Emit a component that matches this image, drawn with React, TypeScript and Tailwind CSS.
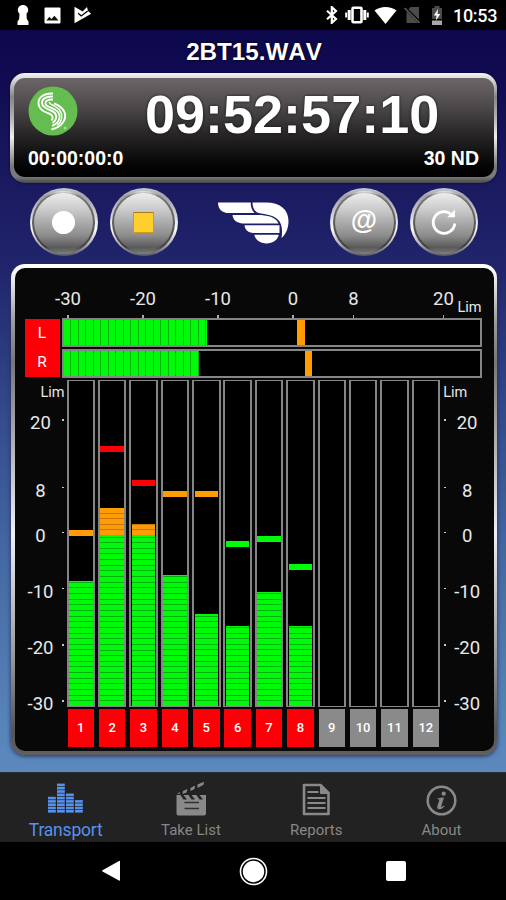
import type { ReactNode } from 'react'

type Peak = 'green' | 'orange' | 'red'

interface Channel {
  id: number
  armed: boolean
  // all values are pixels measured from the top of the meter well
  level?: number
  peak?: number
  color?: Peak
}

const WELL = 324
const ZERO = 154

const CHANNELS: Channel[] = [
  { id: 1, armed: true, level: 199.5, peak: 149, color: 'orange' },
  { id: 2, armed: true, level: 126.5, peak: 65, color: 'red' },
  { id: 3, armed: true, level: 143, peak: 98.5, color: 'red' },
  { id: 4, armed: true, level: 193.5, peak: 109.5, color: 'orange' },
  { id: 5, armed: true, level: 233, peak: 109.5, color: 'orange' },
  { id: 6, armed: true, level: 244.5, peak: 160, color: 'green' },
  { id: 7, armed: true, level: 211, peak: 154.5, color: 'green' },
  { id: 8, armed: true, level: 244.5, peak: 182.5, color: 'green' },
  { id: 9, armed: false },
  { id: 10, armed: false },
  { id: 11, armed: false },
  { id: 12, armed: false },
]

const PEAK_CLASS: Record<Peak, string> = {
  green: 'bg-[#00fb08]',
  orange: 'bg-[#ff9c05]',
  red: 'bg-[#fb0007]',
}

function StatusBar() {
  return (
    <div className="flex h-[30px] shrink-0 items-center bg-black text-white">
      <svg className="ml-[17px]" width="12" height="20" viewBox="0 0 12 20" fill="#fff">
        <path d="M6 0c3 0 5.200 2.200 5.200 5 0 1.600-.7 2.800-1.700 3.700L9.800 14l1.700 2.500V20H.5v-3.500L2.200 14l.3-5.300C1.500 7.800.8 6.600.8 5 .8 2.200 3 0 6 0z" />
      </svg>
      <svg className="ml-[15px]" width="17" height="17" viewBox="0 0 17 17">
        <rect x="0.5" y="0.5" width="16" height="16" rx="1" fill="#fff" />
        <path d="M2.500 13.500l2.800-3.700 2.200 2.200 2.900-3.300 4.100 4.800z" fill="#111" />
      </svg>
      <svg className="ml-[13px]" width="18" height="18" viewBox="0 0 18 18">
        <path d="M.5.8L7 4.600l1.500 1L13 1l1 4 3.200 2.800L.5 17.200z" fill="#fff" />
        <path d="M4.200 7.200l3 2.800 6.500-5" fill="none" stroke="#000" strokeWidth="1.300" />
      </svg>
      <div className="grow" />
      <svg width="12" height="18" viewBox="0 0 12 18" fill="none" stroke="#fff" strokeWidth="2.200">
        <path d="M1 4.800l9 8.200-4.200 3.800V1.200L10 5 1 13.200" />
      </svg>
      <svg className="ml-[7px]" width="24" height="18" viewBox="0 0 24 18" fill="none" stroke="#fff">
        <rect x="7.500" y="1.700" width="9" height="14.600" rx="1" strokeWidth="2.600" />
        <path d="M4.200 4v10M19.800 4v10" strokeWidth="3" />
        <path d="M1.200 6.500v5M22.800 6.500v5" strokeWidth="2" />
      </svg>
      <svg className="ml-[5px]" width="23" height="17" viewBox="0 0 23 17" fill="#fff">
        <path d="M11.500 17L.5 3.600C3.500 1.200 7.300 0 11.500 0s8 1.200 11 3.600z" />
      </svg>
      <svg className="ml-[7px]" width="17" height="18" viewBox="0 0 17 18">
        <path d="M6.500 1H15v16H2.500V5.200z" fill="#4b4b4b" />
        <path d="M.5 1.500l15.500 15" stroke="#000" strokeWidth="3" />
        <path d="M.5 2l15 14.800" stroke="#5c5c5c" strokeWidth="1.500" />
      </svg>
      <svg className="ml-[10px]" width="12" height="19" viewBox="0 0 12 19">
        <path d="M3.500 0h5v2H11v11H1V2h2.500z" fill="#4b4b4b" />
        <path d="M1 14.500h10V19H1z" fill="#a8a8a8" />
        <path d="M7 3L2.800 9.500h2.700L5 14.500 9.300 8H6.500z" fill="#fff" />
      </svg>
      <span className="ml-[10px] mr-[9px] mt-[2px] w-[44px] text-[18px] font-medium leading-none tracking-[-0.3px]">10:53</span>
    </div>
  )
}

function RoundButton({ className = '', children }: { className?: string; children: ReactNode }) {
  return (
    <button
      className={`h-[68px] w-[68px] shrink-0 rounded-full bg-[linear-gradient(#c9cad6,#a0a0a6_12%,#c8c8cc_35%,#ffffff_60%,#b0b0b4_82%,#555761)] p-[2.5px] ${className}`}
    >
      <span className="block h-full w-full rounded-full bg-[linear-gradient(#ededed,#77777a_8%,#565658_60%,#3f3f42_88%,#858588)] p-[2px]">
        <span className="flex h-full w-full items-center justify-center rounded-full bg-[linear-gradient(#ededed,#c8c8c8_30%,#a8a8a8_52%,#8c8c8c_72%,#5a5a5a_92%,#707070)]">
          {children}
        </span>
      </span>
    </button>
  )
}

function Display() {
  return (
    <div className="ml-[10px] mr-[9px] h-[110px] shrink-0 rounded-[15px] bg-[linear-gradient(#f4f4f4,#dcdcdc_5%,#858585_22%,#b0b0b0_40%,#f0f0f0_58%,#777_85%,#7c7c7c_94%,#484848)] p-[3.5px] pb-[6px] pt-[5px] shadow-[0_0_3px_#0a0738]">
      <div className="h-full rounded-[11px] bg-[linear-gradient(#6b6567,#4e4a4b_28%,#262425_58%,#050505_88%,#000)] px-[14.500px] pt-[8px] font-['Liberation_Sans',sans-serif] font-bold text-white">
        <div className="flex h-[56px] items-start">
          <svg className="shrink-0" width="50" height="50" viewBox="0 0 50 50">
            <circle cx="25" cy="25" r="24.500" fill="#64bd4e" />
            <g fill="none" stroke="#fff" strokeWidth="1.900">
              <path d="M25 7.500C15 7 10.200 12 10.500 17.500 11 24 17 26 21 27.500c4 1.500 4.500 4.500 2.500 7" />
              <path d="M25 10.500C18 10 13.500 13 14 17.500c.5 4 5 5.500 9 7 6.500 2.500 7 8.500 1.500 12.500" />
              <path d="M25 13.500c-5-.3-8 1.500-7.500 4.500.5 2.500 5 3 8.500 5C34 27 33.500 36 24 40" />
              <path d="M26 17.500C37 21.500 40 30 34.500 37c-2.500 3.500-6.500 5.500-11 6.200" />
              <path d="M21 16c1 2.500 4 3 7 5 8 5 7 14 1 18.500" strokeWidth="1.400" />
            </g>
            <circle cx="37" cy="42" r="1" fill="none" stroke="#d8f0d0" strokeWidth=".7" />
          </svg>
          <span className="ml-[67px] whitespace-nowrap text-[54px] leading-[56px] [text-shadow:0_0_3px_#111]">09:52:57:10</span>
        </div>
        <div className="mt-[5px] flex justify-between text-[19.500px] leading-[22px]">
          <span>00:00:00:0</span>
          <span>30 ND</span>
        </div>
      </div>
    </div>
  )
}

function Controls() {
  return (
    <div className="flex h-[81px] shrink-0 items-start pt-[5px]">
      <RoundButton className="ml-[29.500px]">
        <span className="h-[23px] w-[23px] rounded-full bg-white" />
      </RoundButton>
      <RoundButton className="ml-[12px]">
        <span className="h-[21px] w-[21px] border border-[#d09a22] border-t-[#a87a20] bg-[#ffd02b]" />
      </RoundButton>
      <svg className="ml-[38.500px] mt-[13px] shrink-0" width="75" height="44" viewBox="0 0 75 44" fill="#fff">
        <path d="M2 1.500h32.700c0 4.500 1.300 8 3.800 10.600H13C6 12.100 2 8 2 1.500z" />
        <path d="M36.500 1.500H50c14 0 22.500 7 22.500 18.500 0 7.500-2.500 13-7 17 .8-4.500.8-9.500-.5-13.500C62.500 16 54 13.800 45 12.600c-6-.8-8.500-5-8.500-11.100z" />
        <path d="M16.500 14h25c10 0 18.500 2 21 8.600H29c-7.500 0-12-3-12.500-8.600z" />
        <path d="M28.500 24.300h35v7.800H39c-6.500 0-10-2.800-10.500-7.800z" />
        <path d="M38.300 33.800h24.500c-1 5.200-6 8.700-12.300 8.700s-11.200-3.500-12.200-8.700z" />
      </svg>
      <RoundButton className="ml-[39px]">
        <span className="pb-[3px] font-['Liberation_Sans',sans-serif] text-[27px] font-bold leading-none text-white">@</span>
      </RoundButton>
      <RoundButton className="ml-[12px]">
        <svg width="28" height="30" viewBox="0 0 28 30" fill="none">
          <path d="M20.500 6.800A10.800 10.800 0 1 0 24.800 16.500" stroke="#fff" strokeWidth="2.800" />
          <path d="M25 2.500v7.800h-7.800z" fill="#fff" />
        </svg>
      </RoundButton>
    </div>
  )
}

function TopScale() {
  return (
    <div className="flex h-[50px] items-start pl-[16px] text-[18.500px] leading-[20px] text-[#e8e8e8]">
      {['-30', '-20', '-10', '0'].map((label) => (
        <div key={label} className="flex w-[75px] shrink-0 flex-col items-center pt-[21px]">
          <span>{label}</span>
          <span className="mt-[6px] h-[3.500px] w-[1.500px] bg-[#aaa]" />
        </div>
      ))}
      <div className="-ml-[7px] flex w-[60px] shrink-0 flex-col items-center pt-[21px]">
        <span>8</span>
        <span className="mt-[6px] h-[3.500px] w-[1.500px] bg-[#aaa]" />
      </div>
      <div className="ml-[30px] flex w-[60px] shrink-0 flex-col items-center pt-[21px]">
        <span>20</span>
        <span className="mt-[6px] h-[3.500px] w-[1.500px] bg-[#aaa]" />
      </div>
      <span className="-ml-[16px] mt-[30.500px] text-[14.500px]">Lim</span>
    </div>
  )
}

function StereoBar({ level, peak }: { level: number; peak: number }) {
  return (
    <div className="flex h-[29px] w-[419.500px] border-2 border-[#868686] bg-black">
      <div
        className="bg-[repeating-linear-gradient(to_right,#00fa0a_0_6.500px,#00b40c_6.500px_7.500px)]"
        style={{ width: level }}
      />
      <div className="w-[7.500px] bg-[#ff9c05]" style={{ marginLeft: peak - level }} />
    </div>
  )
}

function SideScale({ right = false }: { right?: boolean }) {
  const marks = [
    { label: '20', gap: 'mt-[10px]' },
    { label: '8', gap: 'mt-[47.500px]' },
    { label: '0', gap: 'mt-[25px]' },
    { label: '-10', gap: 'mt-[36.200px]' },
    { label: '-20', gap: 'mt-[36.200px]' },
    { label: '-30', gap: 'mt-[36.200px]' },
  ]
  return (
    <div className={`flex shrink-0 flex-col text-[18.500px] leading-[20px] text-[#e8e8e8] ${right ? 'w-[53px]' : 'w-[52px]'}`}>
      <span className={`mt-[3px] text-[14.500px] ${right ? 'pl-[3px]' : 'pr-[2px] text-right'}`}>Lim</span>
      {marks.map((m) => (
        <div key={m.label} className={`flex h-[20px] items-center ${m.gap} ${right ? 'flex-row-reverse pl-[4px]' : 'pr-[3px]'}`}>
          <span className={`text-center ${right ? 'mr-[5px] w-[42px]' : 'w-[49px] pl-[5px]'}`}>{m.label}</span>
          <span className="-mt-[6px] h-[1.500px] w-[2px] shrink-0 bg-[#c8c8c8]" />
        </div>
      ))}
    </div>
  )
}

function ChannelStrip({ ch }: { ch: Channel }) {
  const level = ch.level ?? WELL
  const peak = ch.peak ?? 0
  const hot = Math.max(0, ZERO - level)
  const over = level < ZERO ? ZERO - hot : level
  return (
    <div className="w-[28.500px] shrink-0">
      <div className="flex h-[327px] flex-col border-x-2 border-y-[1.500px] border-[#858585] bg-black px-[.5px]">
        {ch.color && (
          <>
            <div className={`h-[6px] shrink-0 ${PEAK_CLASS[ch.color]}`} style={{ marginTop: peak }} />
            <div className="shrink-0" style={{ height: Math.max(0, over - peak - 6) }} />
            <div
              className="shrink-0 bg-[repeating-linear-gradient(to_top,#ff9c05_0_4.600px,#c87508_4.600px_5.600px)]"
              style={{ height: hot }}
            />
            <div className="grow bg-[repeating-linear-gradient(to_top,#00fb08_0_4.650px,#00b00c_4.650px_5.650px)]" />
          </>
        )}
      </div>
      <div
        className={`mx-[1px] mt-[2px] flex h-[38px] items-center justify-center text-[13px] font-medium text-white ${ch.armed ? 'bg-[#fb0007]' : 'bg-[#8a8a8a]'}`}
      >
        {ch.id}
      </div>
    </div>
  )
}

function MeterPanel() {
  return (
    <div className="ml-[11px] mr-[9px] h-[491px] shrink-0 rounded-[14px] bg-[linear-gradient(#fff,#f5f5f5_2%,#999_12%,#777_20%,#aaa_35%,#f0f0f5_55%,#999_80%,#555_95%,#606060)] p-[3.500px] pb-[4.500px] shadow-[0_1px_4px_#2a2c50]">
      <div className="flex h-full flex-col rounded-[10px] bg-[#080808]">
        <TopScale />
        <div className="flex">
          <div className="ml-[10px] mr-[2.500px] mt-[1.500px] grid h-[58px] w-[35px] shrink-0 grid-rows-2 place-items-center bg-[#fb0007] text-[15.500px] leading-none text-white">
            <span>L</span>
            <span>R</span>
          </div>
          <div className="flex flex-col gap-[2.500px]">
            <StereoBar level={143} peak={233} />
            <StereoBar level={135} peak={240.500} />
          </div>
        </div>
        <div className="mt-[2px] flex">
          <SideScale />
          <div className="flex shrink-0 gap-[2.880px]">
            {CHANNELS.map((ch) => (
              <ChannelStrip key={ch.id} ch={ch} />
            ))}
          </div>
          <SideScale right />
        </div>
      </div>
    </div>
  )
}

function EqIcon() {
  const bars = [
    { x: 0, n: 5 },
    { x: 9, n: 9 },
    { x: 18, n: 6 },
    { x: 27, n: 4 },
  ]
  return (
    <svg width="35" height="30" viewBox="0 0 35 30" fill="#5791ee">
      {bars.map((b) =>
        Array.from({ length: b.n }, (_, i) => (
          <rect key={`${b.x}-${i}`} x={b.x} y={27 - i * 3.300} width="7.800" height="2.600" />
        )),
      )}
    </svg>
  )
}

function Tab({ label, active = false, children }: { label: string; active?: boolean; children: ReactNode }) {
  return (
    <button className="flex w-[125.300px] shrink-0 flex-col items-center">
      <span className={`flex h-[47px] items-end justify-center ${active ? 'pb-[7px]' : 'pb-[4px]'}`}>{children}</span>
      <span
        className={`whitespace-nowrap leading-[20px] ${active ? 'text-[17.500px] tracking-[-0.2px] text-[#5791ee]' : 'text-[15px] text-[#878787]'}`}
      >
        {label}
      </span>
    </button>
  )
}

function TabBar() {
  return (
    <div className="flex h-[70px] shrink-0 items-start border-t border-[#2c2f38] bg-[#222] pl-[3px]">
      <Tab label="Transport" active>
        <EqIcon />
      </Tab>
      <Tab label="Take List">
        <svg width="32" height="35" viewBox="0 0 32 35">
          <path d="M1.500 14h4l3 4.500H12L8.500 14h5l3 4.500H20L16.500 14h5l3 4.500H28L24.500 14H31v18.500q0 2-2 2H3.500q-2 0-2-2V14z" fill="#898989" />
          <path d="M2 12.800l3-1.800-.5 2zM8 10l4.500-2-1 3.500-4 1.500zM15.500 7L20 4.500 19.500 8l-4 2zM22.500 3.500L29 .8l-.5 3-6 3.200z" fill="#898989" />
          <path d="M9.500 21.500H24M9.500 27.500H24" stroke="#303030" strokeWidth="1.500" />
        </svg>
      </Tab>
      <Tab label="Reports">
        <svg width="29" height="33" viewBox="0 0 29 33" fill="none" stroke="#898989" strokeWidth="2.600">
          <path d="M2 2h16.500l8 8v21H2z" strokeLinejoin="round" />
          <path d="M18.500 2v8.500h8z" fill="#898989" strokeWidth="1" />
          <path d="M5.500 9h11M5.500 15h18M5.500 20h18M5.500 25h18" strokeWidth="2" />
        </svg>
      </Tab>
      <Tab label="About">
        <svg width="31" height="31" viewBox="0 0 31 31">
          <circle cx="15.500" cy="15.500" r="13.800" fill="none" stroke="#898989" strokeWidth="2.500" />
          <circle cx="17.700" cy="8.700" r="2.100" fill="#898989" />
          <path d="M11.500 13.500q3-.8 6.500-1l-2.800 8.700q-.5 1.800 2.800-.7l.7.800q-3.500 3.500-6 3-2.200-.5-1.200-3.500l1.800-5.500q.4-1.200-1.800-1z" fill="#898989" />
        </svg>
      </Tab>
    </div>
  )
}

function NavBar() {
  return (
    <div className="flex h-[58px] shrink-0 items-center bg-black">
      <svg className="ml-[101px]" width="20" height="22" viewBox="0 0 20 22" fill="#fff">
        <path d="M1.500 10.200L18 1q1-.5 1 .7v18.200q0 1.200-1 .6L1.500 11.500q-1-.7 0-1.300z" />
      </svg>
      <svg className="ml-[118px]" width="29" height="29" viewBox="0 0 29 29">
        <circle cx="14.500" cy="14.500" r="13" fill="none" stroke="#fff" strokeWidth="1.600" />
        <circle cx="14.500" cy="14.500" r="10.700" fill="#fff" />
      </svg>
      <span className="ml-[118px] h-[20px] w-[20px] rounded-[2px] bg-white" />
    </div>
  )
}

export default function App() {
  return (
    <div className="flex h-[900px] w-[506px] flex-col overflow-hidden bg-black font-[Roboto,sans-serif]">
      <StatusBar />
      <div className="flex h-[742px] shrink-0 flex-col bg-[linear-gradient(#0d084c,#120d53_8%,#1b1b62_22%,#20256b_32%,#32478a_50%,#4467a2_70%,#5480b6_90%,#5c89bd)]">
        <h1 className="h-[43px] shrink-0 pl-[2px] text-center font-['Liberation_Sans',sans-serif] text-[24.200px] font-bold leading-[44px] text-white [font-kerning:none] [text-shadow:0_0_3px_#000]">
          2BT15.WAV
        </h1>
        <Display />
        <Controls />
        <MeterPanel />
      </div>
      <TabBar />
      <NavBar />
    </div>
  )
}
